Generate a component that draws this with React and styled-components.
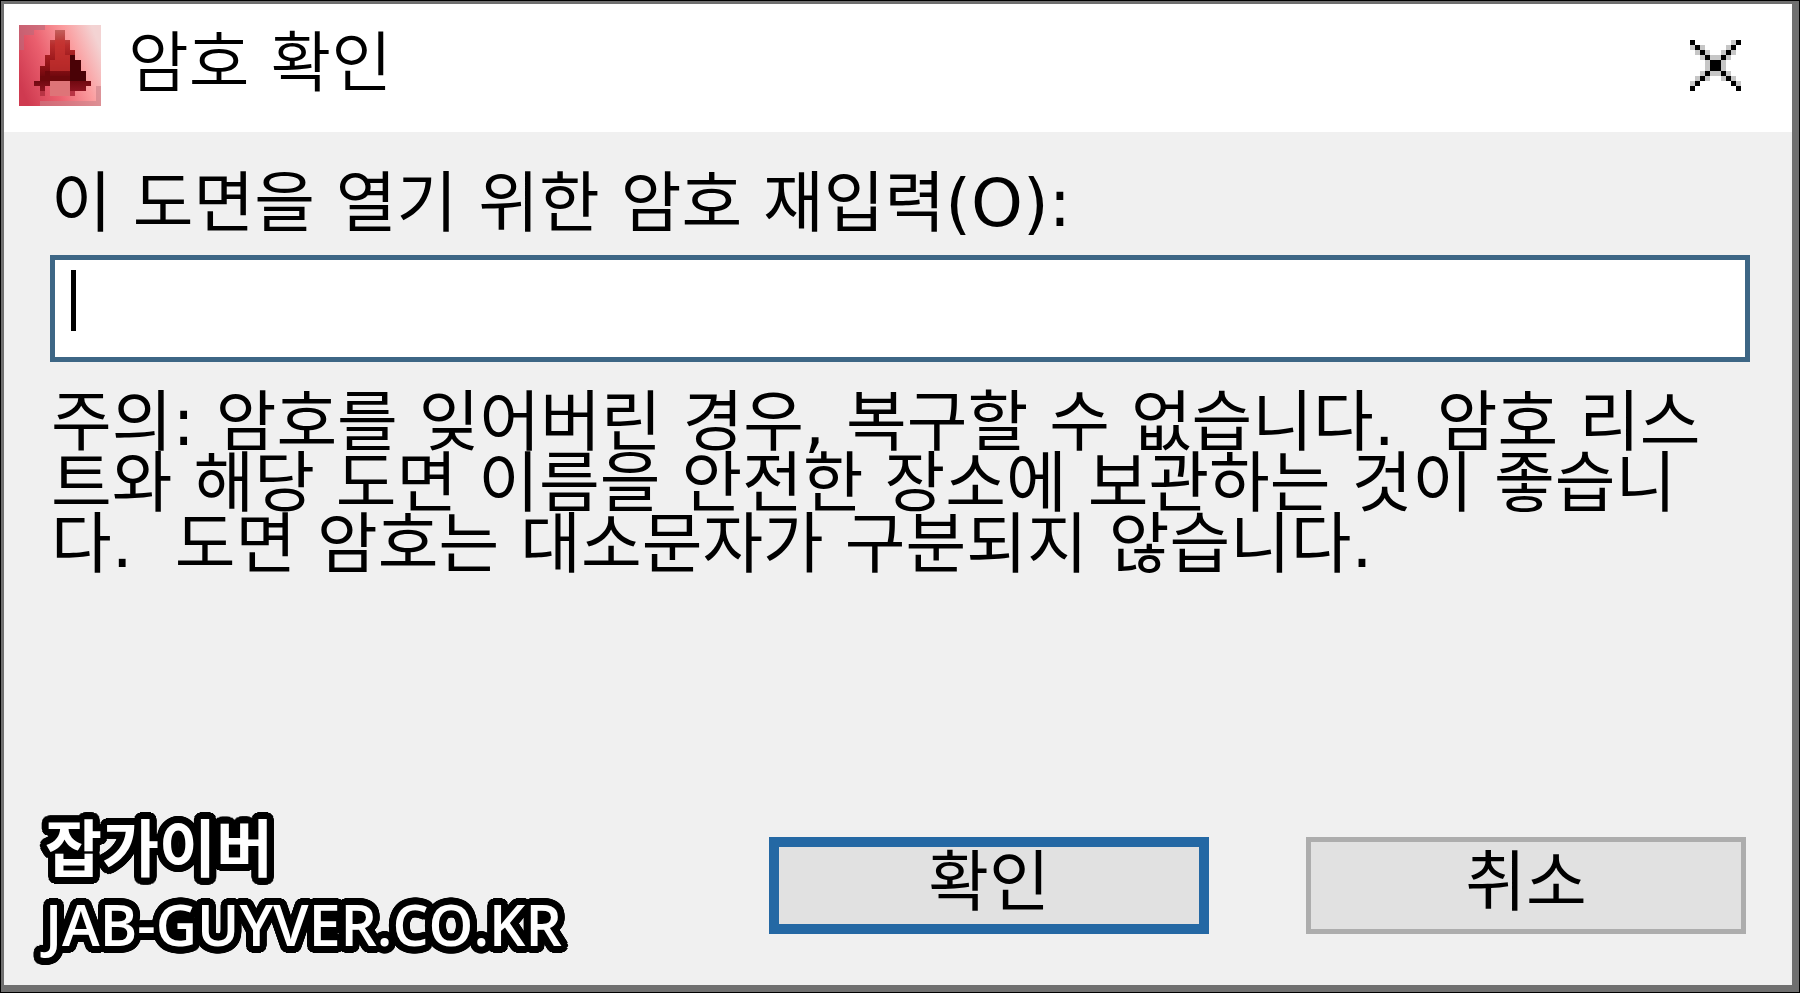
import React, { useState } from "react";
import styled, { createGlobalStyle } from "styled-components";

const GlobalStyle = createGlobalStyle`
  *, *::before, *::after {
    box-sizing: border-box;
  }

  body {
    margin: 0;
    background: #000;
    color: #000;
    font-family: "DejaVu Sans", "Noto Sans CJK KR", sans-serif;
    font-size: 66px;
    font-weight: 400;
    line-height: 61px;
  }
`;

// Dark outline first, then the grey frame inside it
const Dialog = styled.form`
  display: flex;
  flex-direction: column;
  min-height: 100vh;
  border: 1px solid #000;
  background: #f0f0f0;
  box-shadow: inset 3px 3px 0 #6f6f6f, inset -7px -7px 0 #6f6f6f;
  padding: 3px 7px 7px 3px;
`;

const TitleBar = styled.header`
  display: flex;
  align-items: flex-start;
  gap: 27px;
  padding: 21px 51px 0 15px;
  height: 128px;
  background: #fff;
`;

const Title = styled.h1`
  flex: 1;
  margin: 8px 0 0;
  font-size: 66px;
  font-weight: 350;
  line-height: 61px;
`;

const CloseButton = styled.button`
  margin-top: 15px;
  padding: 0;
  border: 0;
  background: none;
  line-height: 0;
`;

const Content = styled.main`
  flex: 1;
  display: flex;
  flex-direction: column;
  padding: 41px 42px 0 46px;
`;

const Label = styled.label`
  padding-left: 1px;
`;

const Field = styled.div`
  display: flex;
  height: 107px;
  margin-top: 21px;
  padding: 10px 16px;
  border: 5px solid #3d6685;
  background: #fff;
`;

const Caret = styled.span`
  width: 5px;
  height: 61px;
  background: #000;
`;

const PasswordInput = styled.input`
  flex: 1;
  min-width: 0;
  padding: 0;
  border: 0;
  outline: 0;
  background: none;
  caret-color: transparent;
  font: inherit;
`;

const Notice = styled.p`
  margin: 30px 0 0;
  padding-left: 1px;
  white-space: pre-wrap;
`;

const Footer = styled.footer`
  display: flex;
  justify-content: space-between;
  align-items: flex-start;
  padding: 0 46px 23px 41px;
`;

const outline = (radius) =>
  Array.from({ length: 32 }, (_, i) => {
    const angle = (i * Math.PI) / 16;
    const x = (radius * Math.cos(angle)).toFixed(2);
    const y = (radius * Math.sin(angle)).toFixed(2);
    return `${x}px ${y}px 0 #000`;
  }).join(", ");

const Watermark = styled.div`
  color: #fff;
  font-family: "Open Sans", "Noto Sans CJK KR", sans-serif;
  font-size: 57px;
  font-weight: 600;
  line-height: 76px;
  white-space: nowrap;
  text-shadow: ${outline(7)}, ${outline(3)};
`;

const SiteName = styled.div`
  font-size: 62px;
  font-weight: 700;
`;

const Buttons = styled.div`
  display: flex;
  gap: 97px;
  margin-top: 27px;
`;

const Button = styled.button`
  width: 440px;
  height: 97px;
  padding: 0 0 6px;
  border: ${(props) => (props.$primary ? "10px solid #2468a4" : "5px solid #adadad")};
  background: #e1e1e1;
  color: #000;
  font: inherit;
`;

const AppIcon = () => (
  <svg
    width="82"
    height="81"
    viewBox="0 0 16 16"
    preserveAspectRatio="none"
    shapeRendering="crispEdges"
    aria-hidden="true"
  >
    <defs>
      <linearGradient id="tile" x1="0" y1="0.7" x2="1" y2="0.3">
        <stop offset="0" stopColor="#cf3a50" />
        <stop offset="0.35" stopColor="#ea5f6e" />
        <stop offset="0.7" stopColor="#fb9c9e" />
        <stop offset="1" stopColor="#f3d3d3" />
      </linearGradient>
      <linearGradient id="letter" x1="0" y1="0" x2="0" y2="1">
        <stop offset="0" stopColor="#c4605c" />
        <stop offset="0.25" stopColor="#b82c2c" />
        <stop offset="0.55" stopColor="#961418" />
        <stop offset="0.8" stopColor="#6a060c" />
        <stop offset="1" stopColor="#8c1420" />
      </linearGradient>
    </defs>
    <rect width="16" height="16" fill="url(#tile)" />
    <path d="M0 0H5V1H3V2H1V5H0Z" fill="#b96a7c" opacity="0.6" />
    <path d="M4 15H16V16H4ZM15 12H16V15H15Z" fill="#c98088" opacity="0.6" />
    <path d="M6 11H10V14H6Z" fill="#de7478" />
    <path
      d="M7 1H9V3H10V5H11V7H12V9H13V11H14V12H13V13H10V11H6V12H5V13H4V12H3V11H4V8H5V6H6V3H7Z"
      fill="url(#letter)"
    />
    <path d="M4 13H5V14H4ZM10 13H11V14H10Z" fill="#b83444" />
    <path d="M7 3H9V6H10V9H6V7H7Z" fill="#c93432" opacity="0.7" />
    <path d="M10 6H11V7H12V9H13V11H10Z" fill="#4a0206" />
    <path d="M5 9H6V10H10V11H4V10H5Z" fill="#6c080c" />
  </svg>
);

const CloseIcon = () => (
  <svg width="51" height="51" viewBox="0 0 10 10" shapeRendering="crispEdges" aria-hidden="true">
    <path
      fill="#c6c6c6"
      d="M0 1h1v1h-1zM1 2h1v1h-1zM2 3h1v1h-1zM2 1h1v1h-1zM3 2h1v1h-1zM3 3h4v4h-4zM7 1h1v1h-1zM6 2h1v1h-1zM8 2h1v1h-1zM7 3h1v1h-1zM8 0h1v1h-1zM2 6h1v1h-1zM1 7h1v1h-1zM0 8h1v1h-1zM7 6h1v1h-1zM8 7h1v1h-1zM9 8h1v1h-1zM3 7h1v1h-1zM6 7h1v1h-1z"
    />
    <path
      d="M0 0h1v1h-1zM1 1h1v1h-1zM2 2h1v1h-1zM3 3h1v1h-1zM4 4h2v2h-2zM6 6h1v1h-1zM7 7h1v1h-1zM8 8h1v1h-1zM9 9h1v1h-1zM9 0h1v1h-1zM8 1h1v1h-1zM7 2h1v1h-1zM6 3h1v1h-1zM3 6h1v1h-1zM2 7h1v1h-1zM1 8h1v1h-1zM0 9h1v1h-1z"
    />
  </svg>
);

const App = () => {
  const [password, setPassword] = useState("");

  return (
    <>
      <GlobalStyle />
      <Dialog onSubmit={(e) => e.preventDefault()}>
        <TitleBar>
          <AppIcon />
          <Title>암호 확인</Title>
          <CloseButton type="button" aria-label="닫기">
            <CloseIcon />
          </CloseButton>
        </TitleBar>
        <Content>
          <Label htmlFor="password">이 도면을 열기 위한 암호 재입력(O):</Label>
          <Field>
            {password === "" && <Caret />}
            <PasswordInput
              id="password"
              type="password"
              value={password}
              onChange={(e) => setPassword(e.target.value)}
            />
          </Field>
          <Notice>
            주의: 암호를 잊어버린 경우, 복구할 수 없습니다.{"  "}암호 리스
            <br />
            트와 해당 도면 이름을 안전한 장소에 보관하는 것이 좋습니
            <br />
            다.{"  "}도면 암호는 대소문자가 구분되지 않습니다.
          </Notice>
        </Content>
        <Footer>
          <Watermark>
            <SiteName>잡가이버</SiteName>
            JAB-GUYVER.CO.KR
          </Watermark>
          <Buttons>
            <Button type="submit" $primary>확인</Button>
            <Button type="button">취소</Button>
          </Buttons>
        </Footer>
      </Dialog>
    </>
  );
};

export default App;
